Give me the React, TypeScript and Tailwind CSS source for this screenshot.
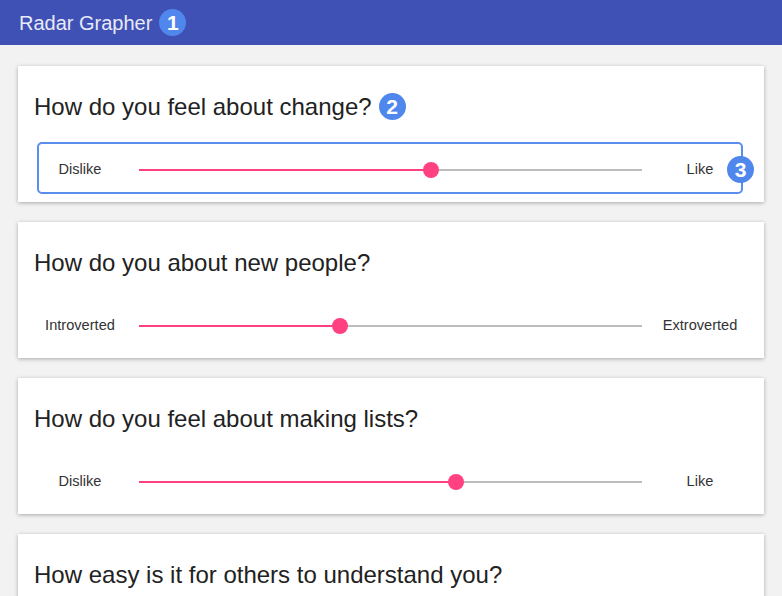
import React from 'react';

interface Question {
  title: string;
  low: string;
  high: string;
  value: number;
}

const questions: Question[] = [
  { title: 'How do you feel about change?', low: 'Dislike', high: 'Like', value: 58 },
  { title: 'How do you about new people?', low: 'Introverted', high: 'Extroverted', value: 40 },
  { title: 'How do you feel about making lists?', low: 'Dislike', high: 'Like', value: 63 },
  { title: 'How easy is it for others to understand you?', low: 'Hard', high: 'Easy', value: 50 },
];

const Badge: React.FC<{ n: number; className?: string }> = ({ n, className = '' }) => (
  <span
    className={`flex items-center justify-center w-[27px] h-[27px] rounded-full bg-[#4f87ec] text-white text-[21px] font-bold leading-none ${className}`}
  >
    {n}
  </span>
);

const Slider: React.FC<{ value: number }> = ({ value }) => (
  <div className="relative flex-1 h-4 flex items-center">
    <div className="w-full h-[2px] bg-[#bdbdbd]" />
    <div className="absolute left-0 h-[2px] bg-[#ff4081]" style={{ width: `${value}%` }} />
    <div
      className="absolute w-4 h-4 -ml-2 rounded-full bg-[#ff4081]"
      style={{ left: `${value}%` }}
    />
  </div>
);

const QuestionCard: React.FC<{ q: Question; marked?: boolean }> = ({ q, marked }) => (
  <div className="bg-white shadow-[0_1px_4px_rgba(0,0,0,0.3)] px-4 pt-[27px] h-[136px] shrink-0">
    <div className="flex items-center gap-[7px] h-[27px]">
      <h2 className="text-[24px] leading-[24px] text-[#222]">{q.title}</h2>
      {marked && <Badge n={2} />}
    </div>
    <div className="relative mt-[22px] flex items-center h-[52px] pt-1">
      {marked && (
        <div className="absolute left-[3px] right-[5px] top-0 bottom-0 border-2 border-[#5b8def] rounded-[5px]" />
      )}
      <div className="w-[92px] text-center text-[14.6px] text-[#333]">{q.low}</div>
      <div className="ml-[13px] flex-1 flex">
        <Slider value={q.value} />
      </div>
      <div className="ml-[10px] w-[96px] text-center text-[14.6px] text-[#333]">{q.high}</div>
      {marked && <Badge n={3} className="absolute right-[-6px] top-[14px]" />}
    </div>
  </div>
);

export default function App() {
  return (
    <div className="min-h-screen bg-[#f2f2f2] font-['Liberation_Sans',Arial,sans-serif]">
      <header className="h-[45px] bg-[#3f51b5] flex items-center pl-[19px] gap-[7px]">
        <span className="text-[20px] text-[#e8eaf6]">Radar Grapher</span>
        <Badge n={1} />
      </header>
      <main className="flex flex-col gap-5 px-[18px] pt-[21px] pb-5">
        {questions.map((q, i) => (
          <QuestionCard key={i} q={q} marked={i === 0} />
        ))}
      </main>
    </div>
  );
}
